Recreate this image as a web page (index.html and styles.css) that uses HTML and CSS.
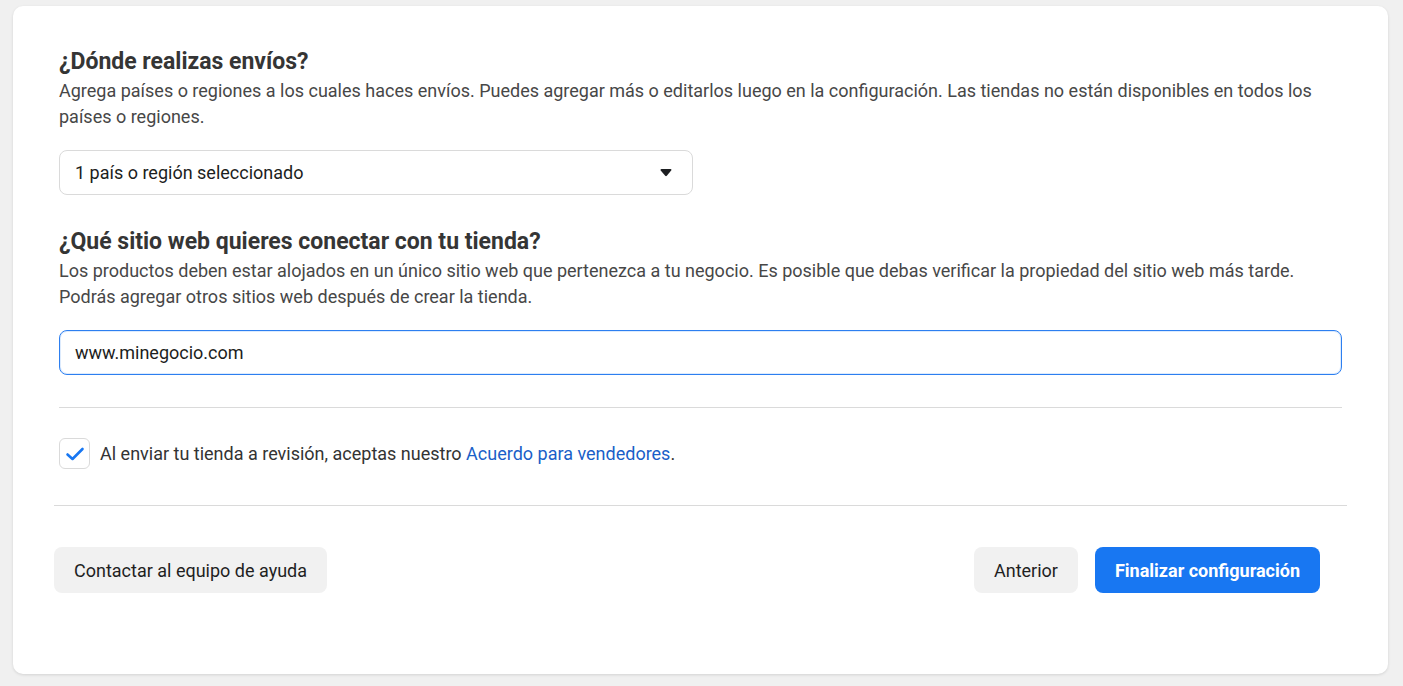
FILE: index.html
```html
<!DOCTYPE html>
<html lang="es">
<head>
<meta charset="utf-8">
<title>Configuración de tienda</title>
<link rel="stylesheet" href="styles.css">
</head>
<body>
<div class="card">
  <div class="content">
    <h2 class="title">¿Dónde realizas envíos?</h2>
    <p class="desc">Agrega países o regiones a los cuales haces envíos. Puedes agregar más o editarlos luego en la configuración. Las tiendas no están disponibles en todos los países o regiones.</p>
    <div class="select">
      <span>1 país o región seleccionado</span>
      <svg class="caret" width="12" height="8" viewBox="0 0 12 8"><path d="M0.5 1.2 Q0.3 0 1.6 0 H10.4 Q11.7 0 11.4 1.2 L6.8 6.8 Q6 7.6 5.2 6.8 Z" fill="#1c1e21"/></svg>
    </div>
    <h2 class="title title2">¿Qué sitio web quieres conectar con tu tienda?</h2>
    <p class="desc">Los productos deben estar alojados en un único sitio web que pertenezca a tu negocio. Es posible que debas verificar la propiedad del sitio web más tarde. Podrás agregar otros sitios web después de crear la tienda.</p>
    <div class="input">www.minegocio.com</div>
    <hr class="divider">
    <div class="check-row">
      <span class="checkbox">
        <svg width="20" height="16" viewBox="0 0 20 16"><path d="M2.5 8.5 L7.5 13 L17.5 3" fill="none" stroke="#1877f2" stroke-width="2.6" stroke-linecap="round" stroke-linejoin="round"/></svg>
      </span>
      <span class="check-text">Al enviar tu tienda a revisión, aceptas nuestro <a href="#" class="link">Acuerdo para vendedores</a>.</span>
    </div>
  </div>
  <div class="footer">
    <button class="btn btn-gray">Contactar al equipo de ayuda</button>
    <div class="right">
      <button class="btn btn-gray">Anterior</button>
      <button class="btn btn-blue">Finalizar configuración</button>
    </div>
  </div>
</div>
</body>
</html>
```
FILE: styles.css
```css
* { box-sizing: border-box; }
html, body { margin: 0; padding: 0; }
body {
  background: #f0f0f0;
  font-family: Roboto, "Liberation Sans", Arial, sans-serif;
  padding: 6px 15px 12px 13px;
  height: 686px;
}
.card {
  background: #fff;
  border-radius: 10px;
  box-shadow: 0 1px 3px rgba(0,0,0,0.12);
  height: 668px;
  display: flex;
  flex-direction: column;
}
.content {
  padding: 42px 46px 0 46px;
}
.title {
  margin: 0;
  font-size: 23px;
  line-height: 28px;
  font-weight: 700;
  color: #353535;
}
.title2 { margin-top: 33px; }
.desc {
  margin: 2px 0 0;
  font-size: 18px;
  line-height: 26px;
  color: #474747;
}
.select {
  margin-top: 20px;
  width: 634px;
  height: 45px;
  border: 1px solid #dadada;
  border-radius: 8px;
  display: flex;
  align-items: center;
  justify-content: space-between;
  padding: 0 20px 0 15px;
  font-size: 18px;
  color: #1c1e21;
}
.caret { display: block; }
.input {
  margin-top: 20px;
  height: 45px;
  border: 1px solid #2d7ff0;
  box-shadow: inset 0 0 0 1px rgba(24,119,242,0.15);
  border-radius: 8px;
  display: flex;
  align-items: center;
  padding: 0 15px;
  font-size: 18px;
  color: #1c1e21;
}
.divider {
  margin: 32px 0 0;
  border: 0;
  border-top: 1px solid #dadada;
  height: 0;
}
.check-row {
  margin-top: 30px;
  display: flex;
  align-items: center;
  gap: 10px;
}
.checkbox {
  width: 31px;
  height: 31px;
  border: 1px solid #dadada;
  border-radius: 6px;
  display: flex;
  align-items: center;
  justify-content: center;
}
.checkbox svg { display: block; }
.check-text {
  font-size: 18px;
  line-height: 22px;
  color: #333;
}
.link {
  color: #1a5fc8;
  text-decoration: none;
}
.footer {
  margin: 36px 41px 0;
  border-top: 1px solid #dadada;
  padding-top: 41px;
  display: flex;
  justify-content: space-between;
  align-items: flex-start;
}
.right {
  display: flex;
  gap: 17px;
  margin-right: 27px;
}
.btn {
  height: 46px;
  border: 0;
  border-radius: 8px;
  font-family: Roboto, "Liberation Sans", Arial, sans-serif;
  font-size: 18px;
  padding: 0 20px;
  cursor: pointer;
}
.btn-gray {
  background: #f1f1f1;
  color: #1f1f1f;
}
.btn-blue {
  background: #1877f2;
  color: #fff;
  font-weight: 700;
  padding: 0 20px;
}
```
